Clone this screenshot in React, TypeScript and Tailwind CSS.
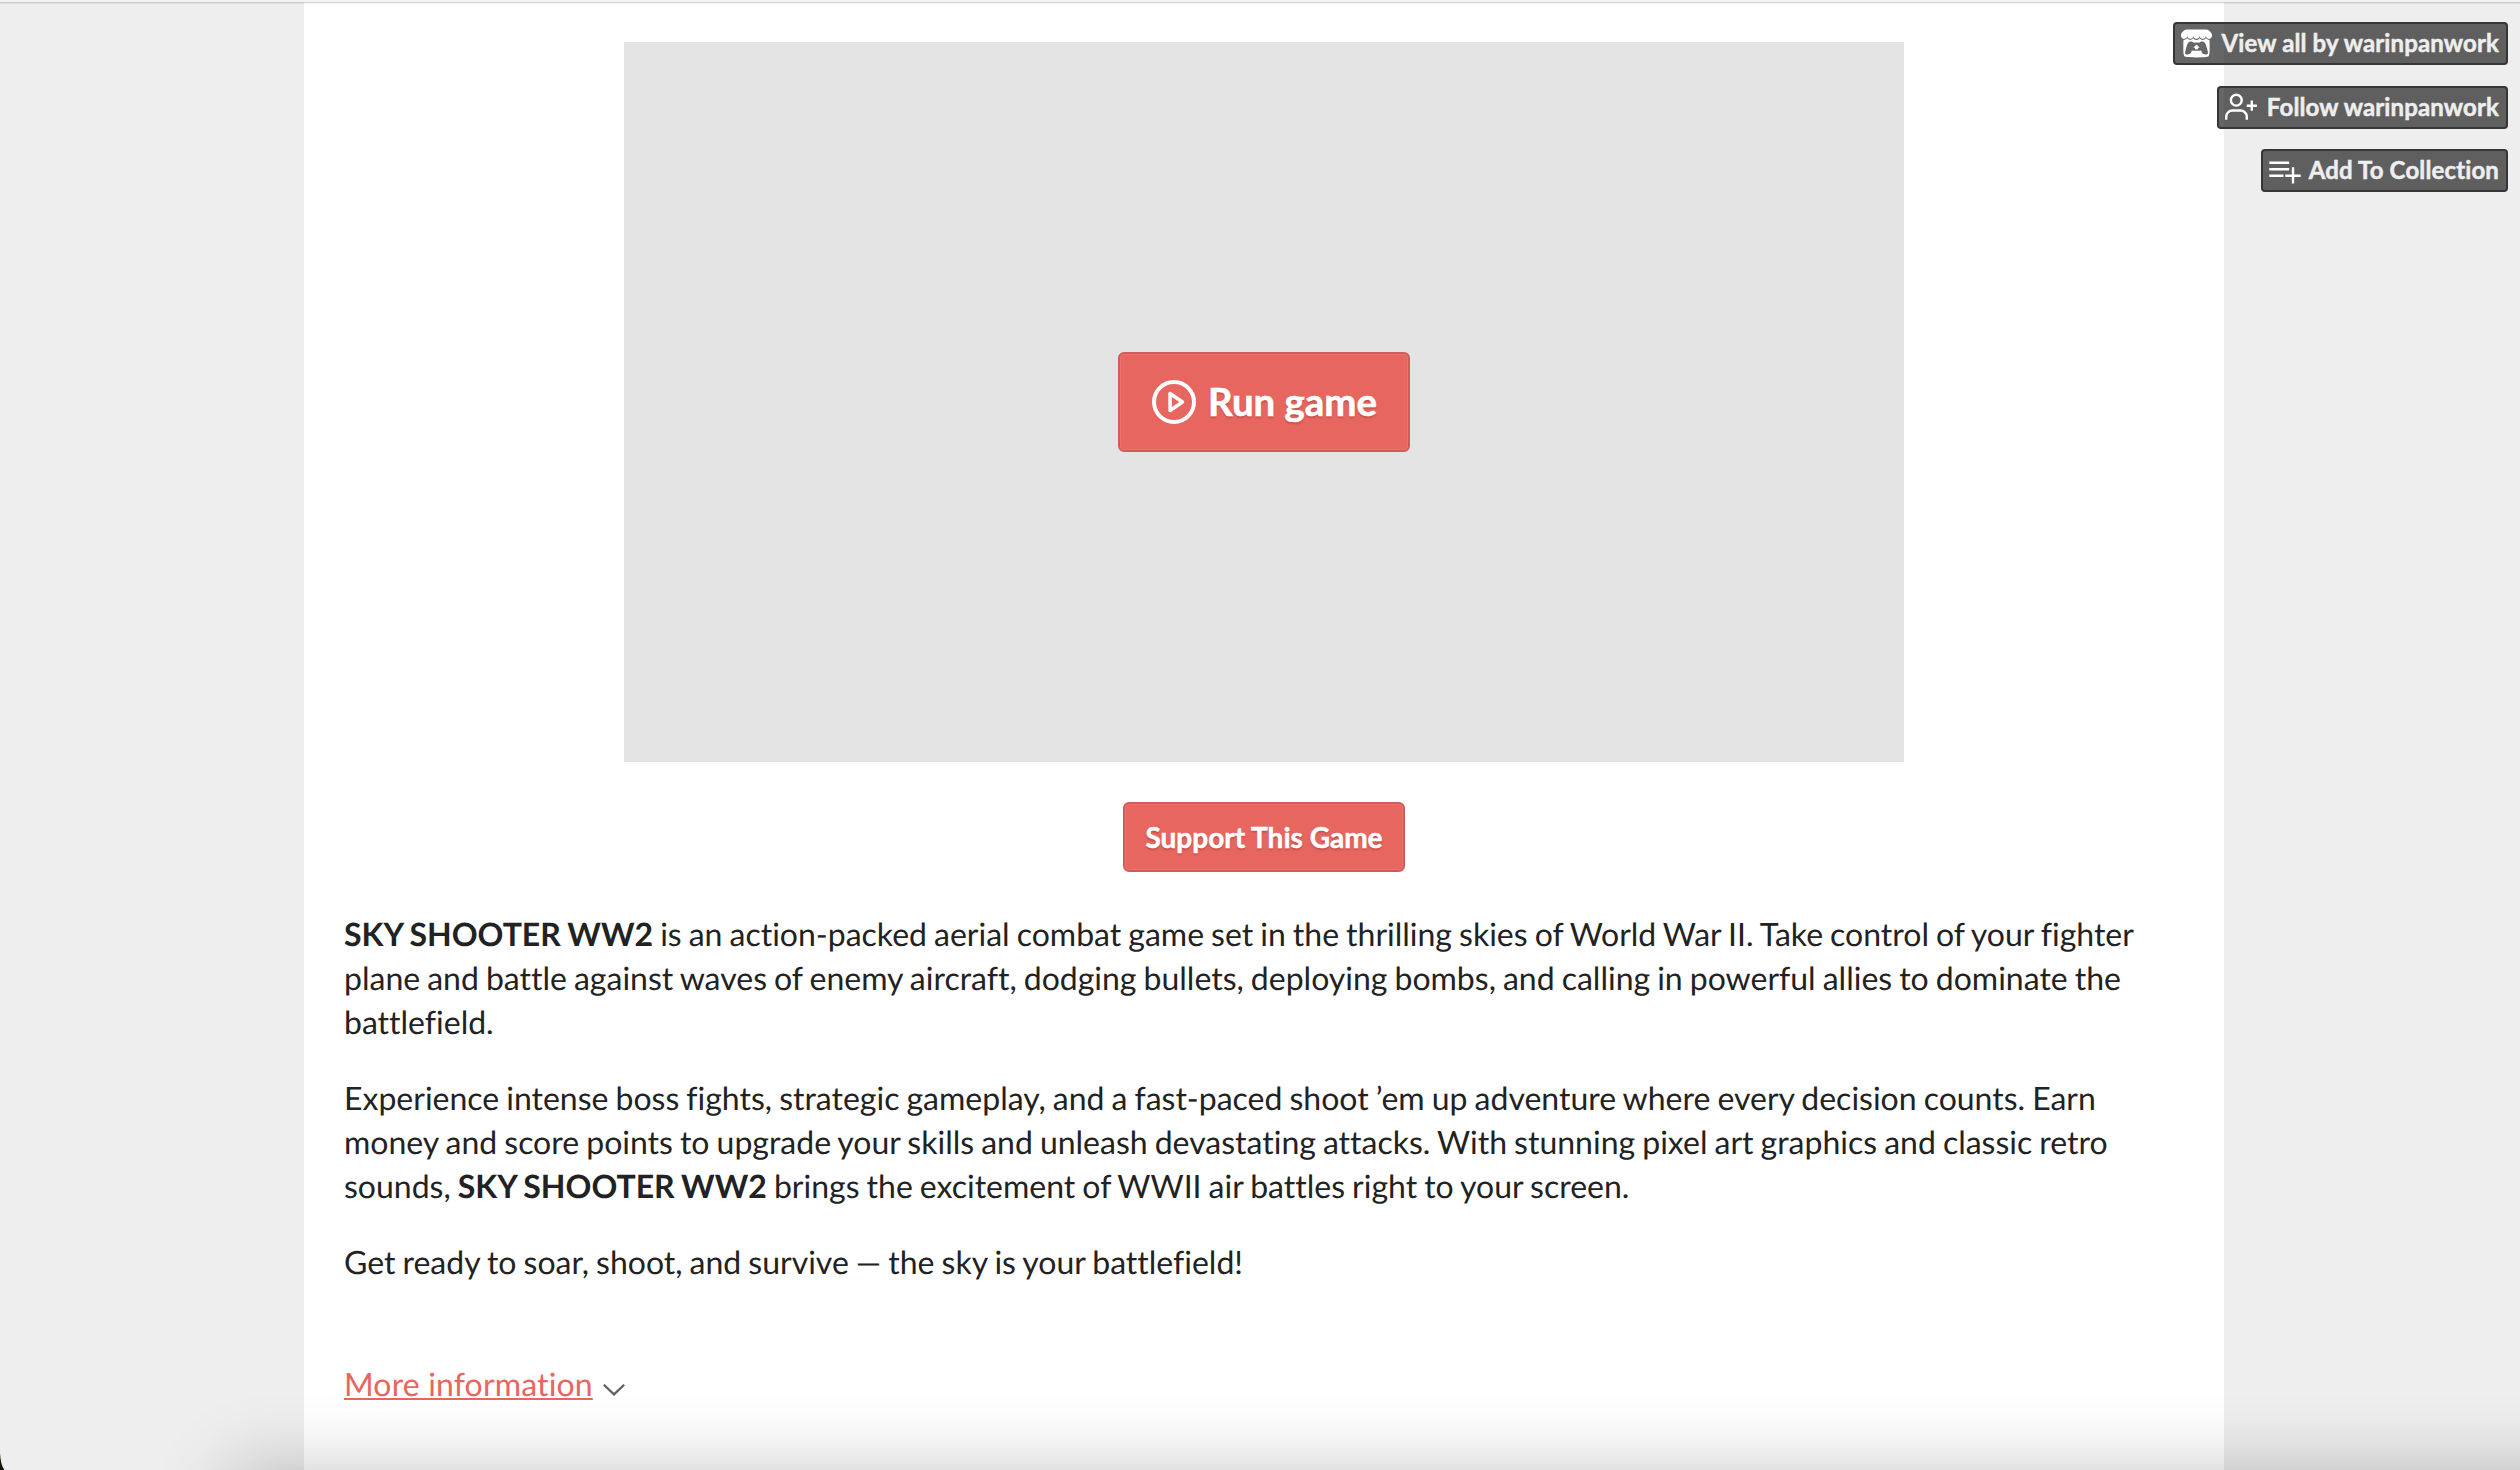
import type { ReactNode } from "react";
import { clsx } from "clsx";
import { SiItchdotio } from "react-icons/si";

const TITLE = "SKY SHOOTER WW2";

function IconUserPlus() {
  return (
    <svg width="32" height="28" viewBox="0 0 32 28" fill="none" stroke="currentColor" strokeWidth="2.4" className="shrink-0 text-white">
      <circle cx="11.3" cy="7.2" r="5.4" />
      <path d="M1.2 26.8v-3.1a6.2 6.2 0 0 1 6.2-6.2h8.2a6.2 6.2 0 0 1 6.2 6.2v3.1" />
      <path d="M26.8 7.6v10.2M21.7 12.7h10.2" />
    </svg>
  );
}

function IconListPlus() {
  return (
    <svg width="32" height="26" viewBox="0 0 32 26" fill="none" stroke="currentColor" strokeWidth="2.4" className="shrink-0 text-white">
      <path d="M0.3 4.8h19.8M0.3 11.2h19.8M0.3 17.8h14.2" />
      <path d="M24 9.2v16.4M16.3 17.8h15.4" />
    </svg>
  );
}

function IconPlay() {
  return (
    <svg width="44" height="44" viewBox="0 0 44 44" fill="none" stroke="currentColor" strokeLinejoin="round" className="shrink-0">
      <circle cx="22" cy="22" r="20" strokeWidth="4" />
      <path d="M18.1 13.6v16.8L30.4 22z" strokeWidth="3.6" />
    </svg>
  );
}

function ToolButton({ icon, className, children }: { icon: ReactNode; className: string; children: ReactNode }) {
  return (
    <button
      className={clsx(
        "flex h-[43px] items-center justify-between rounded-[4px] border-2 border-[#363636] bg-black/60 pl-1.5 pr-[7px] text-[24px] font-bold text-[#eeeeee]",
        className
      )}
    >
      {icon}
      <span className="whitespace-nowrap pb-px tracking-[0.13px] [-webkit-text-stroke:0.5px_currentColor]">{children}</span>
    </button>
  );
}

export default function App() {
  return (
    <div className="relative h-[1470px] w-[2520px] overflow-hidden bg-[#eeeeee] font-['Lato',sans-serif] text-[#222222] antialiased [font-variant-ligatures:none] [text-rendering:geometricPrecision]">
      <main className="ml-[304px] h-full w-[1920px] bg-white px-10 pt-[42px]">
        <div className="mx-auto flex h-[720px] w-[1280px] items-center justify-center bg-[#e4e4e4]">
          <button className="flex h-[100px] w-[292px] items-center justify-center gap-3 rounded-[6px] border-2 border-[#d05c5a] bg-[#e86660] pl-px text-[38.4px] font-bold text-white shadow-[inset_0_0_0_1px_#eb726f]">
            <IconPlay />
            <span className="[-webkit-text-stroke:0.6px_currentColor] [text-shadow:0_2px_2px_#c54f4c]">Run game</span>
          </button>
        </div>

        <div className="mt-10 flex justify-center">
          <button className="h-[70px] w-[282px] rounded-[6px] border-2 border-[#d05c5a] bg-[#e86660] text-[28px] font-bold text-white shadow-[inset_0_0_0_1px_#eb726f] [-webkit-text-stroke:0.5px_currentColor] [text-shadow:0_2px_2px_#c54f4c]">
            Support This Game
          </button>
        </div>

        <div className="mt-10 space-y-8 text-[32px] leading-[44px] [word-spacing:-1.15px]">
          <p>
            <strong>{TITLE}</strong> is an action-packed aerial combat game set in the thrilling skies of World War II. Take control of your fighter plane and battle against waves of enemy aircraft, dodging bullets, deploying bombs, and calling in powerful allies to dominate the battlefield.
          </p>
          <p>
            Experience intense boss fights, strategic gameplay, and a fast-paced shoot ’em up adventure where every decision counts. Earn money and score points to upgrade your skills and unleash devastating attacks. With stunning pixel art graphics and classic retro sounds, <strong>{TITLE}</strong> brings the excitement of WWII air battles right to your screen.
          </p>
          <p>Get ready to soar, shoot, and survive — the sky is your battlefield!</p>
        </div>

        <div className="mt-[78px] flex items-center text-[32px] leading-[44px]">
          <a href="#" className="tracking-[0.15px] text-[#e86660] underline decoration-2 underline-offset-2 [text-decoration-skip-ink:none]">More information</a>
          <svg width="22" height="12" viewBox="0 0 22 12" fill="none" stroke="#606060" strokeWidth="2.2" className="ml-2.5 mt-[11px]">
            <path d="M0.8 0.8L11 10.4 21.2 0.8" />
          </svg>
        </div>
      </main>

      {/* Page actions */}
      <div className="absolute right-3 top-[22px] flex flex-col items-end gap-[20.5px]">
        <ToolButton className="w-[335px]" icon={<SiItchdotio className="size-[31px] shrink-0 text-white" />}>View all by warinpanwork</ToolButton>
        <ToolButton className="w-[291px]" icon={<IconUserPlus />}>Follow warinpanwork</ToolButton>
        <ToolButton className="w-[247px]" icon={<IconListPlus />}>Add To Collection</ToolButton>
      </div>

      {/* Window edge */}
      <div className="absolute inset-x-0 top-0">
        <div className="h-0.5 bg-[#f3f3f3]" />
        <div className="h-px bg-black/15" />
        <div className="h-px bg-black/5" />
      </div>

      {/* Shadow rising from the bottom of the window */}
      <div className="pointer-events-none absolute -bottom-[300px] left-[230px] -right-[200px] h-[300px] shadow-[0_0_70px_0_rgba(0,0,0,0.23)]" />

      {/* Rounded window corner */}
      <svg width="5" height="17" viewBox="0 0 5 17" className="absolute bottom-0 left-0">
        <path d="M0 0C0.4 7 1.6 13 4.4 17H0z" fill="#14180a" />
      </svg>
    </div>
  );
}
